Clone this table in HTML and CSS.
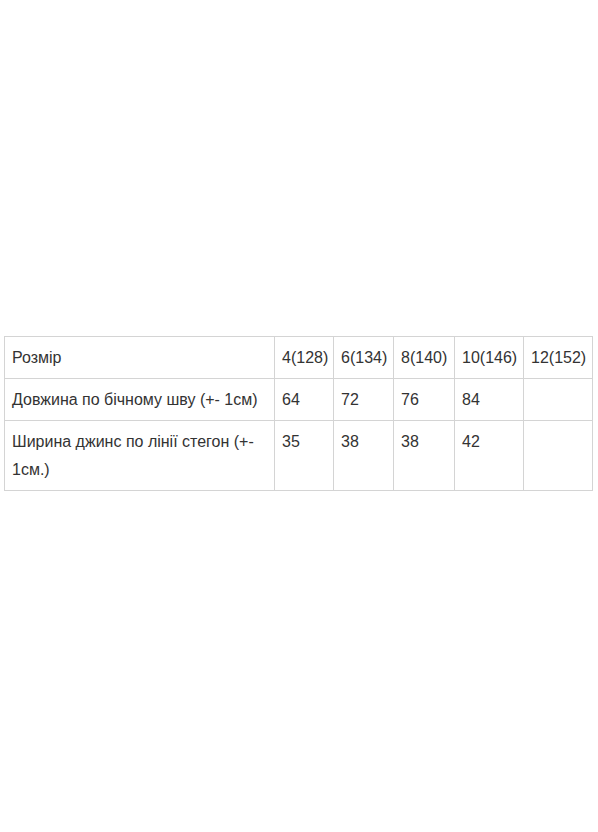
FILE: index.html
```html
<!DOCTYPE html>
<html>
<head>
<meta charset="utf-8">
<link rel="stylesheet" href="styles.css">
</head>
<body>
<div class="page">
<table class="sizes">
<colgroup>
<col class="c1"><col class="c2"><col class="c3"><col class="c4"><col class="c5"><col class="c6">
</colgroup>
<tr><td>Розмір</td><td>4(128)</td><td>6(134)</td><td>8(140)</td><td>10(146)</td><td>12(152)</td></tr>
<tr><td>Довжина по бічному шву (+- 1см)</td><td>64</td><td>72</td><td>76</td><td>84</td><td></td></tr>
<tr><td>Ширина джинс по лінії стегон (+- 1см.)</td><td>35</td><td>38</td><td>38</td><td>42</td><td></td></tr>
</table>
</div>
</body>
</html>
```
FILE: styles.css
```css
html, body {
  margin: 0;
  padding: 0;
  background: #fff;
}
.page {
  padding: 336px 0 0 4px;
}
.sizes {
  border-collapse: collapse;
  table-layout: fixed;
  width: 589px;
  font-family: "Liberation Sans", Arial, sans-serif;
  font-size: 16px;
  color: #333;
}
.c1 { width: 270px; }
.c2 { width: 59px; }
.c3 { width: 60px; }
.c4 { width: 61px; }
.c5 { width: 69px; }
.c6 { width: 69px; }
.sizes td {
  border: 1px solid #d4d4d4;
  padding: 7px 7px 6px 7px;
  line-height: 28px;
  vertical-align: top;
  text-align: left;
}
```
